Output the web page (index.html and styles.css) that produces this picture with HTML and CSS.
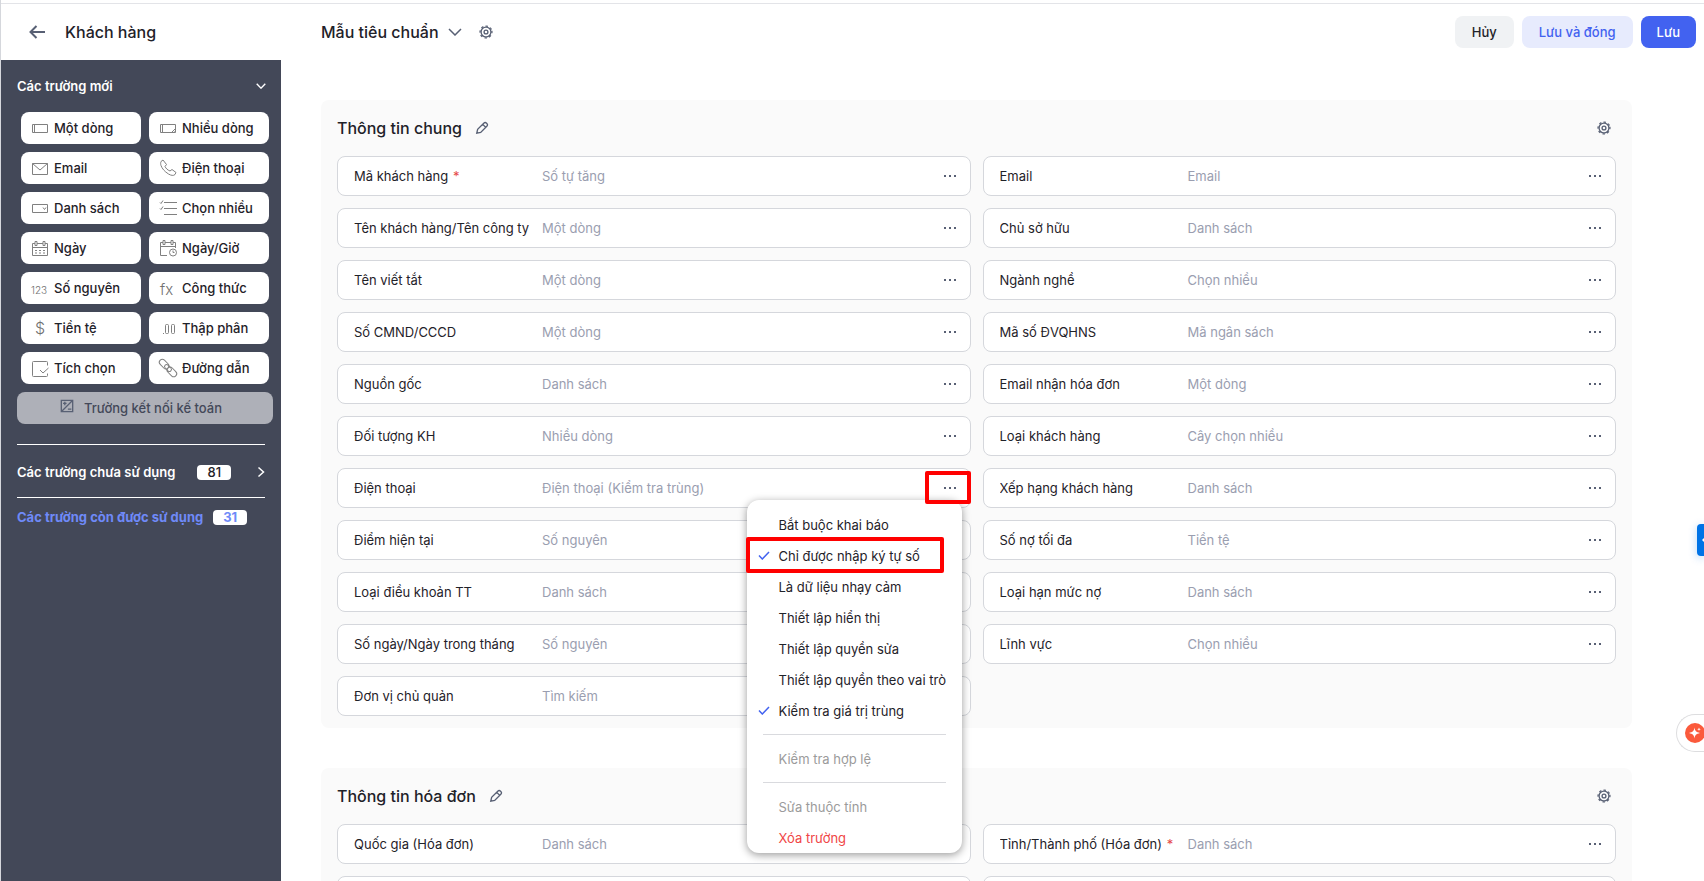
FILE: index.html
```html
<!DOCTYPE html>
<html lang="vi">
<head>
    <meta charset="UTF-8">
    <meta name="viewport" content="width=device-width, initial-scale=1.0">
    <title>Khách hàng - Mẫu tiêu chuẩn</title>
    <link rel="stylesheet" href="styles.css">
</head>
<body>
    <svg class="sprite" aria-hidden="true">
        <symbol id="i-gear" viewBox="0 0 16 16"><circle cx="8" cy="8" r="5.600"/><circle cx="8" cy="8" r="6.800" stroke-dasharray="2.670 2.670" transform="rotate(-11 8 8)"/><circle cx="8" cy="8" r="2.200"/></symbol>
        <symbol id="i-pencil" viewBox="0 0 16 16"><path d="M2 14l1-4.500 7-7c1-1 2.200-1 3.200 0l.3.300c1 1 1 2.200 0 3.200l-7 7zM9 4l3 3"/></symbol>
        <symbol id="i-dots" viewBox="0 0 14 4"><path d="M1 1h2v2H1zM6 1h2v2H6zM11 1h2v2h-2z"/></symbol>
        <symbol id="i-down" viewBox="0 0 14 8"><path d="M1 1l6 6 6-6"/></symbol>
        <symbol id="i-check" viewBox="0 0 12 9"><path d="M1 4.500L4.300 8 11 1"/></symbol>
    </svg>

    <header class="topbar">
        <div class="topbar-left">
            <button class="icon-btn" aria-label="Quay lại">
                <svg class="back-icon" viewBox="0 0 16 14"><path d="M16 7H1.500M7.500 1l-6 6 6 6"/></svg>
            </button>
            <h1>Khách hàng</h1>
        </div>
        <div class="topbar-main">
            <button class="layout-select">Mẫu tiêu chuẩn <svg class="down-icon"><use href="#i-down"/></svg></button>
            <button class="icon-btn" aria-label="Thiết lập"><svg class="gear-icon"><use href="#i-gear"/></svg></button>
        </div>
        <div class="topbar-actions">
            <button class="btn btn-cancel">Hủy</button>
            <button class="btn btn-light">Lưu và đóng</button>
            <button class="btn btn-primary">Lưu</button>
        </div>
    </header>

    <div class="page">
        <aside class="sidebar">
            <button class="side-title">Các trường mới <svg class="side-down"><use href="#i-down"/></svg></button>
            <div class="type-grid">
                <button class="type"><svg viewBox="0 0 18 18"><path d="M1.500 5.500h15v8h-15zM3.500 5.500v8"/></svg>Một dòng</button>
                <button class="type"><svg viewBox="0 0 18 18"><path d="M1.500 5.500h15v8h-15zM3.500 5.500v8M16.500 9.500l-4 4M16.500 12l-1.500 1.500"/></svg>Nhiều dòng</button>
                <button class="type"><svg viewBox="0 0 18 18"><path d="M1.500 4.500h15v11h-15zM1.500 4.500L9 11l7.500-6.500"/></svg>Email</button>
                <button class="type"><svg viewBox="0 0 18 18"><path d="M2 2.500L4 1l3.500 4.500L6 7.500c1 2 2.500 3.500 5 4.500l2-1.500 4 3-1 2c-1.500 1.500-4 1-6.500-.5C5.500 12.500 3 9.500 2 6.500 1.500 5 1.500 4 2 2.500z"/></svg>Điện thoại</button>
                <button class="type"><svg viewBox="0 0 18 18"><path d="M1.500 5.500h15v8h-15zM12 8.500l1.500 2 1.500-2"/></svg>Danh sách</button>
                <button class="type"><svg viewBox="0 0 18 18"><path d="M5 3.500h13M5 9.500h13M5 15.500h13M1 3.500l1 1 2-3M1 9.500l1 1 2-3"/></svg>Chọn nhiều</button>
                <button class="type"><svg viewBox="0 0 18 18"><path d="M4 4.500H1.500v12h15v-12H14M6 4.500h6M1.500 8.500h15M4 2.500h2v4H4zM12 2.500h2v4h-2z"/><path stroke-dasharray="2 2" d="M4 11.500h11M4 14h11"/></svg>Ngày</button>
                <button class="type"><svg viewBox="0 0 18 18"><path d="M4 3.500H1.500v13H8M6 3.500h6M14 3.500h2.500V9M1.500 7.500h15M4 1.500h2v4H4zM12 1.500h2v4h-2z"/><circle cx="14" cy="13.500" r="3.500"/><path d="M14 11.500v2h1.500"/></svg>Ngày/Giờ</button>
                <button class="type"><svg viewBox="0 0 18 18"><text x="0" y="15">123</text></svg>Số nguyên</button>
                <button class="type"><svg viewBox="0 0 18 18"><text class="fx" x="1" y="16">fx</text></svg>Công thức</button>
                <button class="type"><svg viewBox="0 0 18 18"><text class="money" x="4" y="15">$</text></svg>Tiền tệ</button>
                <button class="type"><svg viewBox="0 0 18 18"><path d="M4 14.500h1"/><rect x="6.500" y="5.500" width="3" height="9" rx="1"/><rect x="12.500" y="5.500" width="3" height="9" rx="1"/></svg>Thập phân</button>
                <button class="type"><svg viewBox="0 0 18 18"><path d="M16.500 6.500v-3c0-1-.5-1-1-1h-13c-1 0-1 .5-1 1v13c0 1 .5 1 1 1h13c1 0 1-.5 1-1v-2M9 11l3 3 5.500-5"/></svg>Tích chọn</button>
                <button class="type"><svg viewBox="0 0 18 18"><g transform="rotate(45 9 9)"><rect x="-2" y="6" width="11" height="6" rx="3"/><rect x="9" y="6" width="11" height="6" rx="3"/><rect x="5" y="7" width="8" height="4" rx="2"/></g></svg>Đường dẫn</button>
            </div>
            <button class="accounting" disabled>
                <svg viewBox="0 0 16 16"><path d="M1.500 1.500h13v13h-13zM2 14L14 2M3.500 5h4M5.500 3v4M9 11.500h4"/></svg>
                Trường kết nối kế toán
            </button>
            <button class="side-row side-unused">
                Các trường chưa sử dụng <span class="count">81</span>
                <svg class="side-right" viewBox="0 0 8 12"><path d="M1.500 1.500L6.500 6l-5 4.500"/></svg>
            </button>
            <button class="side-row side-used">Các trường còn được sử dụng <span class="count">31</span></button>
        </aside>

        <main class="content">
            <section class="panel">
                <div class="panel-head">
                    <h2>Thông tin chung</h2>
                    <button class="icon-btn" aria-label="Sửa tên"><svg class="pencil-icon"><use href="#i-pencil"/></svg></button>
                    <button class="icon-btn panel-gear" aria-label="Thiết lập nhóm"><svg class="gear-icon"><use href="#i-gear"/></svg></button>
                </div>
                <div class="columns">
                    <div class="column">
                        <div class="field"><span class="name">Mã khách hàng <i>*</i></span><span class="kind">Số tự tăng</span><button class="more" aria-label="Tùy chọn"><svg><use href="#i-dots"/></svg></button></div>
                        <div class="field"><span class="name">Tên khách hàng/Tên công ty <i>*</i></span><span class="kind">Một dòng</span><button class="more" aria-label="Tùy chọn"><svg><use href="#i-dots"/></svg></button></div>
                        <div class="field"><span class="name">Tên viết tắt</span><span class="kind">Một dòng</span><button class="more" aria-label="Tùy chọn"><svg><use href="#i-dots"/></svg></button></div>
                        <div class="field"><span class="name">Số CMND/CCCD</span><span class="kind">Một dòng</span><button class="more" aria-label="Tùy chọn"><svg><use href="#i-dots"/></svg></button></div>
                        <div class="field"><span class="name">Nguồn gốc</span><span class="kind">Danh sách</span><button class="more" aria-label="Tùy chọn"><svg><use href="#i-dots"/></svg></button></div>
                        <div class="field"><span class="name">Đối tượng KH</span><span class="kind">Nhiều dòng</span><button class="more" aria-label="Tùy chọn"><svg><use href="#i-dots"/></svg></button></div>
                        <div class="field field-open">
                            <span class="name">Điện thoại</span><span class="kind">Điện thoại (Kiểm tra trùng)</span><button class="more" aria-label="Tùy chọn"><svg><use href="#i-dots"/></svg></button>
                            <div class="menu">
                                <button>Bắt buộc khai báo</button>
                                <button><svg class="check"><use href="#i-check"/></svg>Chỉ được nhập ký tự số</button>
                                <button>Là dữ liệu nhạy cảm</button>
                                <button>Thiết lập hiển thị</button>
                                <button>Thiết lập quyền sửa</button>
                                <button>Thiết lập quyền theo vai trò</button>
                                <button><svg class="check"><use href="#i-check"/></svg>Kiểm tra giá trị trùng</button>
                                <hr>
                                <button disabled>Kiểm tra hợp lệ</button>
                                <hr>
                                <button disabled>Sửa thuộc tính</button>
                                <button class="danger">Xóa trường</button>
                            </div>
                            <div class="mark mark-more"></div>
                            <div class="mark mark-item"></div>
                        </div>
                        <div class="field"><span class="name">Điểm hiện tại</span><span class="kind">Số nguyên</span><button class="more" aria-label="Tùy chọn"><svg><use href="#i-dots"/></svg></button></div>
                        <div class="field"><span class="name">Loại điều khoản TT</span><span class="kind">Danh sách</span><button class="more" aria-label="Tùy chọn"><svg><use href="#i-dots"/></svg></button></div>
                        <div class="field"><span class="name">Số ngày/Ngày trong tháng</span><span class="kind">Số nguyên</span><button class="more" aria-label="Tùy chọn"><svg><use href="#i-dots"/></svg></button></div>
                        <div class="field"><span class="name">Đơn vị chủ quản</span><span class="kind">Tìm kiếm</span><button class="more" aria-label="Tùy chọn"><svg><use href="#i-dots"/></svg></button></div>
                    </div>
                    <div class="column">
                        <div class="field"><span class="name">Email</span><span class="kind">Email</span><button class="more" aria-label="Tùy chọn"><svg><use href="#i-dots"/></svg></button></div>
                        <div class="field"><span class="name">Chủ sở hữu</span><span class="kind">Danh sách</span><button class="more" aria-label="Tùy chọn"><svg><use href="#i-dots"/></svg></button></div>
                        <div class="field"><span class="name">Ngành nghề</span><span class="kind">Chọn nhiều</span><button class="more" aria-label="Tùy chọn"><svg><use href="#i-dots"/></svg></button></div>
                        <div class="field"><span class="name">Mã số ĐVQHNS</span><span class="kind">Mã ngân sách</span><button class="more" aria-label="Tùy chọn"><svg><use href="#i-dots"/></svg></button></div>
                        <div class="field"><span class="name">Email nhận hóa đơn</span><span class="kind">Một dòng</span><button class="more" aria-label="Tùy chọn"><svg><use href="#i-dots"/></svg></button></div>
                        <div class="field"><span class="name">Loại khách hàng</span><span class="kind">Cây chọn nhiều</span><button class="more" aria-label="Tùy chọn"><svg><use href="#i-dots"/></svg></button></div>
                        <div class="field"><span class="name">Xếp hạng khách hàng</span><span class="kind">Danh sách</span><button class="more" aria-label="Tùy chọn"><svg><use href="#i-dots"/></svg></button></div>
                        <div class="field"><span class="name">Số nợ tối đa</span><span class="kind">Tiền tệ</span><button class="more" aria-label="Tùy chọn"><svg><use href="#i-dots"/></svg></button></div>
                        <div class="field"><span class="name">Loại hạn mức nợ</span><span class="kind">Danh sách</span><button class="more" aria-label="Tùy chọn"><svg><use href="#i-dots"/></svg></button></div>
                        <div class="field"><span class="name">Lĩnh vực</span><span class="kind">Chọn nhiều</span><button class="more" aria-label="Tùy chọn"><svg><use href="#i-dots"/></svg></button></div>
                    </div>
                </div>
            </section>

            <section class="panel">
                <div class="panel-head">
                    <h2>Thông tin hóa đơn</h2>
                    <button class="icon-btn" aria-label="Sửa tên"><svg class="pencil-icon"><use href="#i-pencil"/></svg></button>
                    <button class="icon-btn panel-gear" aria-label="Thiết lập nhóm"><svg class="gear-icon"><use href="#i-gear"/></svg></button>
                </div>
                <div class="columns">
                    <div class="column">
                        <div class="field"><span class="name">Quốc gia (Hóa đơn)</span><span class="kind">Danh sách</span><button class="more" aria-label="Tùy chọn"><svg><use href="#i-dots"/></svg></button></div>
                        <div class="field"></div>
                    </div>
                    <div class="column">
                        <div class="field"><span class="name">Tỉnh/Thành phố (Hóa đơn) <i>*</i></span><span class="kind">Danh sách</span><button class="more" aria-label="Tùy chọn"><svg><use href="#i-dots"/></svg></button></div>
                        <div class="field"></div>
                    </div>
                </div>
            </section>
        </main>
    </div>

    <button class="side-tab" aria-label="Mở bảng"><svg viewBox="0 0 12 12"><path d="M5 2L1 6l4 4zM4 5h8v2H4z"/></svg></button>
    <button class="assistant" aria-label="Trợ lý">
        <svg viewBox="0 0 20 20"><circle cx="10" cy="10" r="10"/><path d="M9.500 4.500c.6 3.500 1.500 4.500 5.500 5.500-4 1-4.900 2-5.500 5.500C8.900 12 8 11 4 10c4-1 4.900-2 5.500-5.500zM14 4.500l.5 1.300 1.300.5-1.300.5-.5 1.300-.5-1.300-1.300-.5 1.300-.5z"/></svg>
    </button>
</body>
</html>
```
FILE: styles.css
```css
* {
    box-sizing: border-box;
}
body {
    margin: 0;
    height: 100vh;
    overflow: hidden;
    display: flex;
    flex-direction: column;
    font-family: Inter, sans-serif;
    font-size: 13px;
    line-height: 20px;
    color: #1f2229;
    background-color: #fff;
    border-left: 1px solid #d5d7dc;
    padding-top: 3px;
}
button {
    font: inherit;
    color: inherit;
    background: none;
    border: none;
    padding: 0;
    cursor: pointer;
}
svg {
    display: block;
    flex: none;
    fill: none;
    stroke: #586074;
    stroke-width: 1.5px;
}
.sprite {
    position: absolute;
    width: 0;
    height: 0;
}
h1, h2 {
    margin: 0;
    font-size: 16px;
    font-weight: 500;
    line-height: 24px;
}

/* top bar */
.topbar {
    display: flex;
    align-items: center;
    flex: none;
    height: 57px;
    border-top: 1px solid #e3e4e8;
    padding-right: 8px;
}
.topbar-left {
    display: flex;
    align-items: center;
    gap: 20px;
    width: 320px;
    padding-left: 28px;
}
.topbar-main {
    display: flex;
    align-items: center;
    gap: 17px;
}
.layout-select {
    display: flex;
    align-items: center;
    gap: 9px;
    font-size: 16px;
    font-weight: 500;
    line-height: 24px;
}
.back-icon {
    width: 16px;
    height: 14px;
    stroke-width: 2px;
}
.down-icon {
    width: 14px;
    height: 8px;
}
.gear-icon {
    width: 14px;
    height: 14px;
}
.pencil-icon {
    width: 14px;
    height: 14px;
}
.topbar-actions {
    display: flex;
    gap: 8px;
    margin-left: auto;
}
.btn {
    height: 32px;
    padding: 0 16px;
    border-radius: 8px;
    font-weight: 500;
}
.btn-cancel {
    padding: 0 17px;
    background-color: #f0f2f4;
}
.btn-light {
    padding: 0 17px;
    background-color: #e7ebfd;
    color: #4262f0;
}
.btn-primary {
    background-color: #4262f0;
    color: #fff;
}

.page {
    display: flex;
    flex: 1;
    min-height: 0;
}

/* field types */
.sidebar {
    flex: none;
    display: flex;
    flex-direction: column;
    width: 280px;
    padding: 16px 8px 0 16px;
    background-color: #434858;
    color: #fff;
}
.side-title {
    display: flex;
    align-items: center;
    justify-content: space-between;
    padding-right: 7px;
    font-weight: 600;
}
.side-title svg, .side-right {
    stroke: #fff;
}
.side-down {
    width: 10px;
    height: 6px;
    stroke-width: 2px;
}
.type-grid {
    display: grid;
    grid-template-columns: 1fr 1fr;
    gap: 8px;
    padding: 16px 4px 8px;
}
.type {
    display: flex;
    align-items: center;
    gap: 5px;
    height: 32px;
    padding-left: 10px;
    border-radius: 8px;
    background-color: #fff;
    color: #1f2229;
    font-weight: 500;
    white-space: nowrap;
}
.type svg {
    width: 18px;
    height: 18px;
    overflow: visible;
    stroke: #808080;
    stroke-width: 1px;
}
.type text {
    fill: #707070;
    stroke: none;
    font-size: 10px;
    font-weight: 300;
}
.type .fx {
    font-size: 15px;
}
.type .money {
    font-size: 16px;
}
.accounting {
    display: flex;
    align-items: center;
    justify-content: center;
    gap: 10px;
    height: 32px;
    padding-right: 8px;
    border-radius: 8px;
    background-color: #aeb0b8;
    color: #434858;
    font-weight: 500;
}
.accounting svg {
    width: 14px;
    height: 14px;
    margin-bottom: 4px;
}
.side-row {
    display: flex;
    align-items: center;
    margin-right: 8px;
    border-top: 1px solid #fff;
    font-weight: 600;
}
.side-unused {
    height: 53px;
    margin-top: 20px;
    padding-top: 2px;
}
.side-unused .count {
    margin-left: 22px;
}
.side-used {
    height: 39px;
    color: #6f8af8;
    font-weight: 700;
}
.side-used .count {
    margin-left: 10px;
}
.count {
    width: 34px;
    border-radius: 4px;
    background-color: #fff;
    line-height: 15px;
    text-align: center;
}
.side-unused .count {
    color: #1f2229;
    font-weight: 500;
}
.side-right {
    width: 8px;
    height: 12px;
    margin-left: auto;
}

/* form layout */
.content {
    flex: 1;
    display: flex;
    flex-direction: column;
    gap: 40px;
    min-width: 0;
    overflow: hidden;
    padding: 40px 72px 0 40px;
}
.panel {
    flex: none;
    padding: 0 16px;
    border-radius: 8px;
    background-color: #fafafa;
}
.panel-head {
    display: flex;
    align-items: center;
    gap: 13px;
    height: 56px;
}
.panel-gear {
    margin-left: auto;
    margin-right: 5px;
}
.columns {
    display: grid;
    grid-template-columns: 1fr 1fr;
    gap: 12px;
}
.field {
    position: relative;
    display: flex;
    align-items: center;
    height: 40px;
    margin-bottom: 12px;
    padding: 0 13px 0 16px;
    border: 1px solid #d5d7dc;
    border-radius: 8px;
    background-color: #fff;
}
.name {
    width: 180px;
    margin-right: 8px;
    overflow: hidden;
    white-space: nowrap;
}
.name i {
    margin-left: 1px;
    color: #e54848;
    font-style: normal;
}
.kind {
    flex: 1;
    color: #9a9eb0;
}
.more svg {
    width: 14px;
    height: 4px;
    fill: #586074;
    stroke: none;
}
.field-open {
    z-index: 1;
}

/* field menu */
.menu {
    position: absolute;
    top: 31px;
    right: 8px;
    display: flex;
    flex-direction: column;
    width: 215px;
    padding: 9px 16px 0;
    border-radius: 12px;
    background-color: #fff;
    box-shadow: 0 2px 8px rgba(0,0,0,0.4);
}
.menu button {
    display: flex;
    align-items: center;
    height: 31px;
    padding-left: 16px;
    white-space: nowrap;
}
.menu button:disabled {
    color: #9b9b9b;
}
.menu .danger {
    color: #f04545;
}
.menu hr {
    width: 100%;
    margin: 8px 0;
    border: none;
    border-top: 1px solid #d9dade;
}
.check {
    width: 12px;
    height: 9px;
    margin: 0 9px 0 -21px;
    stroke: #4262f0;
}
.mark {
    position: absolute;
    border: 4px solid #f00;
    border-radius: 2px;
    pointer-events: none;
}
.mark-more {
    top: 2px;
    right: -1px;
    width: 46px;
    height: 33px;
}
.mark-item {
    top: 68px;
    right: 26px;
    width: 198px;
    height: 36px;
}

/* edge buttons */
.side-tab {
    position: absolute;
    right: 0;
    top: 524px;
    width: 7px;
    height: 32px;
    overflow: hidden;
    border-radius: 4px 0 0 4px;
    background-color: #0073e6;
    box-shadow: 0 2px 8px rgba(0,115,230,0.3);
}
.side-tab svg {
    width: 12px;
    height: 12px;
    margin-left: 4px;
    fill: #fff;
    stroke: none;
}
.assistant {
    position: absolute;
    right: 0;
    top: 714px;
    width: 28px;
    height: 38px;
    padding-left: 8px;
    overflow: hidden;
    border: 1px solid #dddddf;
    border-right: none;
    border-radius: 19px 0 0 19px;
    background-color: #fff;
}
.assistant svg {
    width: 20px;
    height: 20px;
    stroke: none;
}
.assistant circle {
    fill: #fb5a3c;
}
.assistant path {
    fill: #fff;
}
```
